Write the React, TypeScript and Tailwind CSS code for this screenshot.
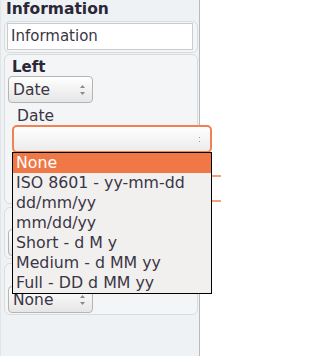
import React from "react";

const options = [
  "None",
  "ISO 8601 - yy-mm-dd",
  "dd/mm/yy",
  "mm/dd/yy",
  "Short - d M y",
  "Medium - d MM yy",
  "Full - DD d MM yy",
];

function Spinner() {
  return (
    <span className="ml-auto mr-[7px] flex flex-col items-center gap-[4px]">
      <svg width="5" height="3" viewBox="0 0 5 3">
        <path d="M0 3 L2.5 0 L5 3 Z" fill="#8a8a8a" />
      </svg>
      <svg width="5" height="3" viewBox="0 0 5 3">
        <path d="M0 0 L2.5 3 L5 0 Z" fill="#8a8a8a" />
      </svg>
    </span>
  );
}

function Select({ value }: { value: string }) {
  return (
    <div className="flex items-center w-[85px] h-[27px] rounded-[4px] border border-[#b4b4b4] bg-gradient-to-b from-white to-[#e6e6e6] pl-[4px] text-[15.5px] leading-[18px] text-[#3a3646]">
      <span>{value}</span>
      <Spinner />
    </div>
  );
}

function Box({ children, className = "" }: { children: React.ReactNode; className?: string }) {
  return (
    <div
      className={`ml-[3px] w-[194px] rounded-[6px] border border-[#d8dcdf] bg-[#f3f5f7] ${className}`}
    >
      {children}
    </div>
  );
}

export default function App() {
  return (
    <div className="relative w-[200px] h-[356px] bg-[#eff2f5] border-l border-[#e2e5e8] border-r border-r-[#b8bbbe] font-['DejaVu_Sans',sans-serif] text-[#3a3646]">
      <div className="h-[18px] pl-[5px] text-[15.5px] leading-[19px] font-bold text-[#2b2738]">
        Information
      </div>

      <Box className="mt-[3px] h-[32px] pt-[1px] pl-[2px]">
        <div className="w-[186px] h-[27px] border border-[#c9cccf] bg-white pl-[3px] text-[15px] leading-[25px]">
          Information
        </div>
      </Box>

      <Box className="mt-[1px] h-[150px] pt-[3px] pl-[3px]">
        <div className="h-[18px] pl-[4px] text-[15px] leading-[18px] font-bold text-[#2b2738]">
          Left
        </div>
        <Select value="Date" />
        <div className="mt-[5px] h-[17px] pl-[9px] text-[15.5px] leading-[17px]">Date</div>
        <div className="ml-[4px] w-[200px] h-[28px] rounded-[5px] border-2 border-[#f08150] bg-gradient-to-b from-white to-[#ebebeb] flex items-center justify-end">
          <span className="mr-[10px] flex flex-col gap-[3px]">
            <span className="block w-[1px] h-[1px] bg-[#9a9a9a]" />
            <span className="block w-[1px] h-[1px] bg-[#9a9a9a]" />
          </span>
        </div>
        <div className="mt-[22px] ml-[4px] w-[209px] h-[27px] border-t-2 border-b-2 border-[#f4a07a]" />
      </Box>

      <Box className="mt-[3px] h-[52px] pt-[3px] pl-[3px]">
        <div className="h-[18px] pl-[4px] text-[15px] leading-[18px] font-bold text-[#2b2738]">
          Center
        </div>
        <Select value="None" />
      </Box>

      <Box className="mt-[4px] h-[52px] pt-[3px] pl-[3px]">
        <div className="h-[19px] pl-[4px] text-[15px] leading-[18px] font-bold text-[#2b2738]">
          Right
        </div>
        <Select value="None" />
      </Box>

      <ul className="absolute left-[11px] top-[152px] w-[200px] border border-black bg-[#f2f0ee] text-[15.8px]">
        {options.map((o, i) => (
          <li
            key={o}
            className={`h-[20px] leading-[20px] pl-[3px] whitespace-nowrap ${
              i === 0 ? "bg-[#f07846] text-white" : "text-[#3a3646]"
            }`}
          >
            {o}
          </li>
        ))}
      </ul>
    </div>
  );
}
